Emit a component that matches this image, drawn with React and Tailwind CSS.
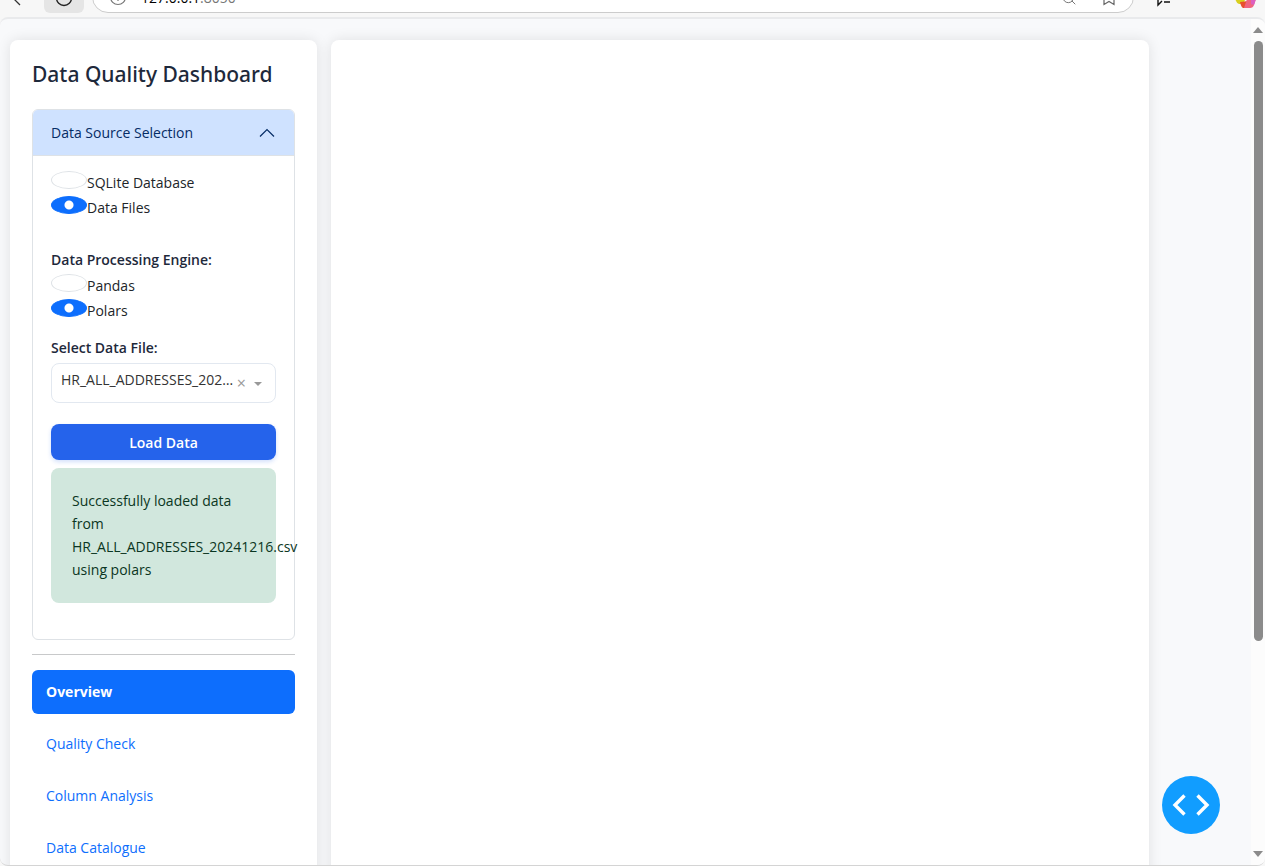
import { FiSearch } from "react-icons/fi";

const FILE = "HR_ALL_ADDRESSES_20241216.csv";
const PAGES = ["Quality Check", "Column Analysis", "Data Catalogue"];

function Radio({ name, label, defaultChecked }) {
  return (
    <label className="flex h-[25px] items-start text-[#212529]">
      <input
        type="radio"
        name={name}
        defaultChecked={defaultChecked}
        className="h-[18px] w-9 shrink-0 appearance-none rounded-[50%] border border-[#dee2e6] bg-white checked:border-[#0d6efd] checked:bg-[#0d6efd] checked:bg-[radial-gradient(circle,white_4px,transparent_5px)]"
      />
      <span className="leading-6">{label}</span>
    </label>
  );
}

function BrowserBar() {
  return (
    <header className="flex h-[17px] shrink-0 items-end overflow-hidden bg-[#f7f7f7] pb-1">
      <button aria-label="Back" className="flex h-8 w-11 items-end pb-1 pl-3">
        <svg viewBox="0 0 16 16" className="size-4" fill="none" stroke="#333" strokeWidth="1.3">
          <path d="M8 0 L2 6 L8 12" />
        </svg>
      </button>
      <button aria-label="Reload" className="flex h-8 w-10 items-end justify-center rounded-md bg-[#e5e5e5] pb-[6px]">
        <svg viewBox="0 0 18 18" className="size-[18px]" fill="none" stroke="#222" strokeWidth="1.4">
          <circle cx="9" cy="9" r="7.5" />
        </svg>
      </button>
      <div className="ml-2 flex h-8 flex-1 items-end rounded-full border border-[#ccc] bg-white pr-4 pl-4">
        <svg viewBox="0 0 18 18" className="mb-[6px] size-[18px]" fill="none" stroke="#777" strokeWidth="1.2">
          <circle cx="9" cy="9" r="7.5" />
          <path d="M9 8 V13" />
        </svg>
        <span className="mb-1 ml-3.5 flex-1 text-sm leading-5 text-black">
          127.0.0.1<span className="text-[#767676]">:8050</span>
        </span>
        <FiSearch className="mr-6 mb-[6px] size-4 text-[#777]" strokeWidth={1.5} />
        <svg viewBox="0 0 16 16" className="mb-[6px] size-4" fill="none" stroke="#666" strokeWidth="1.2">
          <path d="M3 1 V14.5 L8 11.5 L13 14.5 V1 Z" />
        </svg>
      </div>
      <svg viewBox="0 0 18 18" className="mb-[6px] ml-5 size-[18px]" fill="none" stroke="#111" strokeWidth="1.4">
        <path d="M4 4 V16 L8 12 M10 13 H16" />
      </svg>
      <svg viewBox="0 0 24 24" className="mr-[7px] mb-[5px] ml-[62px] size-6">
        <path d="M1 14 H12 L9 20 H5 Q2 19 1 14 Z" fill="#d8cf1e" />
        <path d="M6 18 L14 17 L11 24 H9 Q7 23 6 18 Z" fill="#e8502e" />
        <path d="M14 12 H23 L20 21 Q19 24 16 24 H10 Z" fill="#f0647f" />
        <path d="M17 12 H23 L20 21 L17 20 Z" fill="#dc5fc0" />
      </svg>
    </header>
  );
}

function DataSource() {
  return (
    <section className="rounded-md border border-[#dee2e6]">
      <button className="flex h-[46px] w-full items-center justify-between rounded-t-[5px] border-b border-[#dee2e6] bg-[#cfe2ff] pr-[19px] pl-[18px] text-[#052c65]">
        Data Source Selection
        <svg viewBox="0 0 16 16" className="size-4" fill="none" stroke="currentColor" strokeWidth="1.2">
          <path d="M1 11.5 L8 4.5 L15 11.5" />
        </svg>
      </button>
      <div className="px-[18px] pt-[15px] pb-9">
        <Radio name="source" label="SQLite Database" />
        <Radio name="source" label="Data Files" defaultChecked />
        <h2 className="mt-[27px] mb-0.5 leading-6 font-semibold text-[#1e293b]">Data Processing Engine:</h2>
        <Radio name="engine" label="Pandas" />
        <Radio name="engine" label="Polars" defaultChecked />
        <label htmlFor="file" className="mt-3 block leading-6 font-semibold text-[#1e293b]">
          Select Data File:
        </label>
        <div className="relative mt-[3px]">
          <select
            id="file"
            className="h-10 w-full appearance-none truncate rounded-lg border border-[#e2e8f0] bg-white pr-[39px] pb-1.5 pl-[9px] text-[#333]"
          >
            <option>{FILE}</option>
          </select>
          <button aria-label="Clear" className="absolute top-2 right-[30px] text-base leading-6 text-[#999]">
            ×
          </button>
          <svg viewBox="0 0 8 4" className="pointer-events-none absolute top-[19px] right-3.5 h-1 w-2" fill="#999">
            <path d="M0 0 H8 L4 4 Z" />
          </svg>
        </div>
        <button className="mt-[21px] h-9 w-full rounded-lg bg-[#2563eb] pt-0.5 font-semibold text-white shadow-[0_2px_4px_rgba(37,99,235,0.2)]">
          Load Data
        </button>
        <p role="status" className="mt-2 rounded-lg bg-[#d1e7dd] px-[21px] pt-[21px] pb-[22px] leading-[23px] text-[#0a3622]">
          Successfully loaded data from {FILE} using polars
        </p>
      </div>
    </section>
  );
}

export default function App() {
  return (
    <div className="flex h-screen flex-col overflow-hidden bg-[#f7f7f7] font-['Open_Sans','Noto_Sans',sans-serif] text-sm">
      <BrowserBar />
      <div className="flex min-h-0 flex-1 overflow-hidden rounded-lg border-t-2 border-b border-t-[#e9eaec] border-b-[#d4d4d4] bg-[#f8f9fb]">
        <div className="flex min-w-0 flex-1 gap-3.5 overflow-hidden pt-[21px] pr-[102px] pl-2.5">
          <aside className="h-fit min-h-full w-[307px] shrink-0 rounded-lg bg-white px-[22px] pt-4 pb-6 shadow-[0_0_14px_rgba(0,0,0,0.1)]">
            <h1 className="mb-[17px] font-['Noto_Sans',sans-serif] text-[21px] leading-9 font-medium whitespace-nowrap text-[#1e293b]">
              Data Quality Dashboard
            </h1>
            <DataSource />
            <hr className="my-[15px] mt-3.5 border-[#c8c9ca]" />
            <nav className="flex flex-col gap-2">
              <a href="#overview" className="flex h-11 items-center rounded-md bg-[#0d6efd] px-3.5 font-bold text-white">
                Overview
              </a>
              {PAGES.map((page) => (
                <a key={page} href="#page" className="flex h-11 items-center rounded-md px-3.5 text-[#0d6efd]">
                  {page}
                </a>
              ))}
            </nav>
          </aside>
          <main className="h-[1200px] flex-1 rounded-lg bg-white shadow-[0_0_14px_rgba(0,0,0,0.1)]" />
        </div>
        <div className="flex w-3.5 shrink-0 flex-col items-center bg-[#fcfcfc] py-2">
          <svg viewBox="0 0 10 6" className="h-1.5 w-2.5 shrink-0" fill="#8b8b8b">
            <path d="M5 0 L10 6 H0 Z" />
          </svg>
          <div className="mt-2 h-[600px] w-[9px] rounded-full bg-[#8b8b8b]" />
          <svg viewBox="0 0 10 6" className="mt-auto h-1.5 w-2.5 shrink-0" fill="#8b8b8b">
            <path d="M0 0 H10 L5 6 Z" />
          </svg>
        </div>
      </div>
      <button
        aria-label="Developer tools"
        className="fixed right-[45px] bottom-8 flex size-[58px] items-center justify-center rounded-full bg-[#119dff]"
      >
        <svg viewBox="0 0 38 22" className="h-[22px] w-[38px]" fill="none" stroke="white" strokeWidth="3.4">
          <path d="M12.5 1.5 L3 11 L12.5 20.5 M25.5 1.5 L35 11 L25.5 20.5" />
        </svg>
      </button>
    </div>
  );
}
